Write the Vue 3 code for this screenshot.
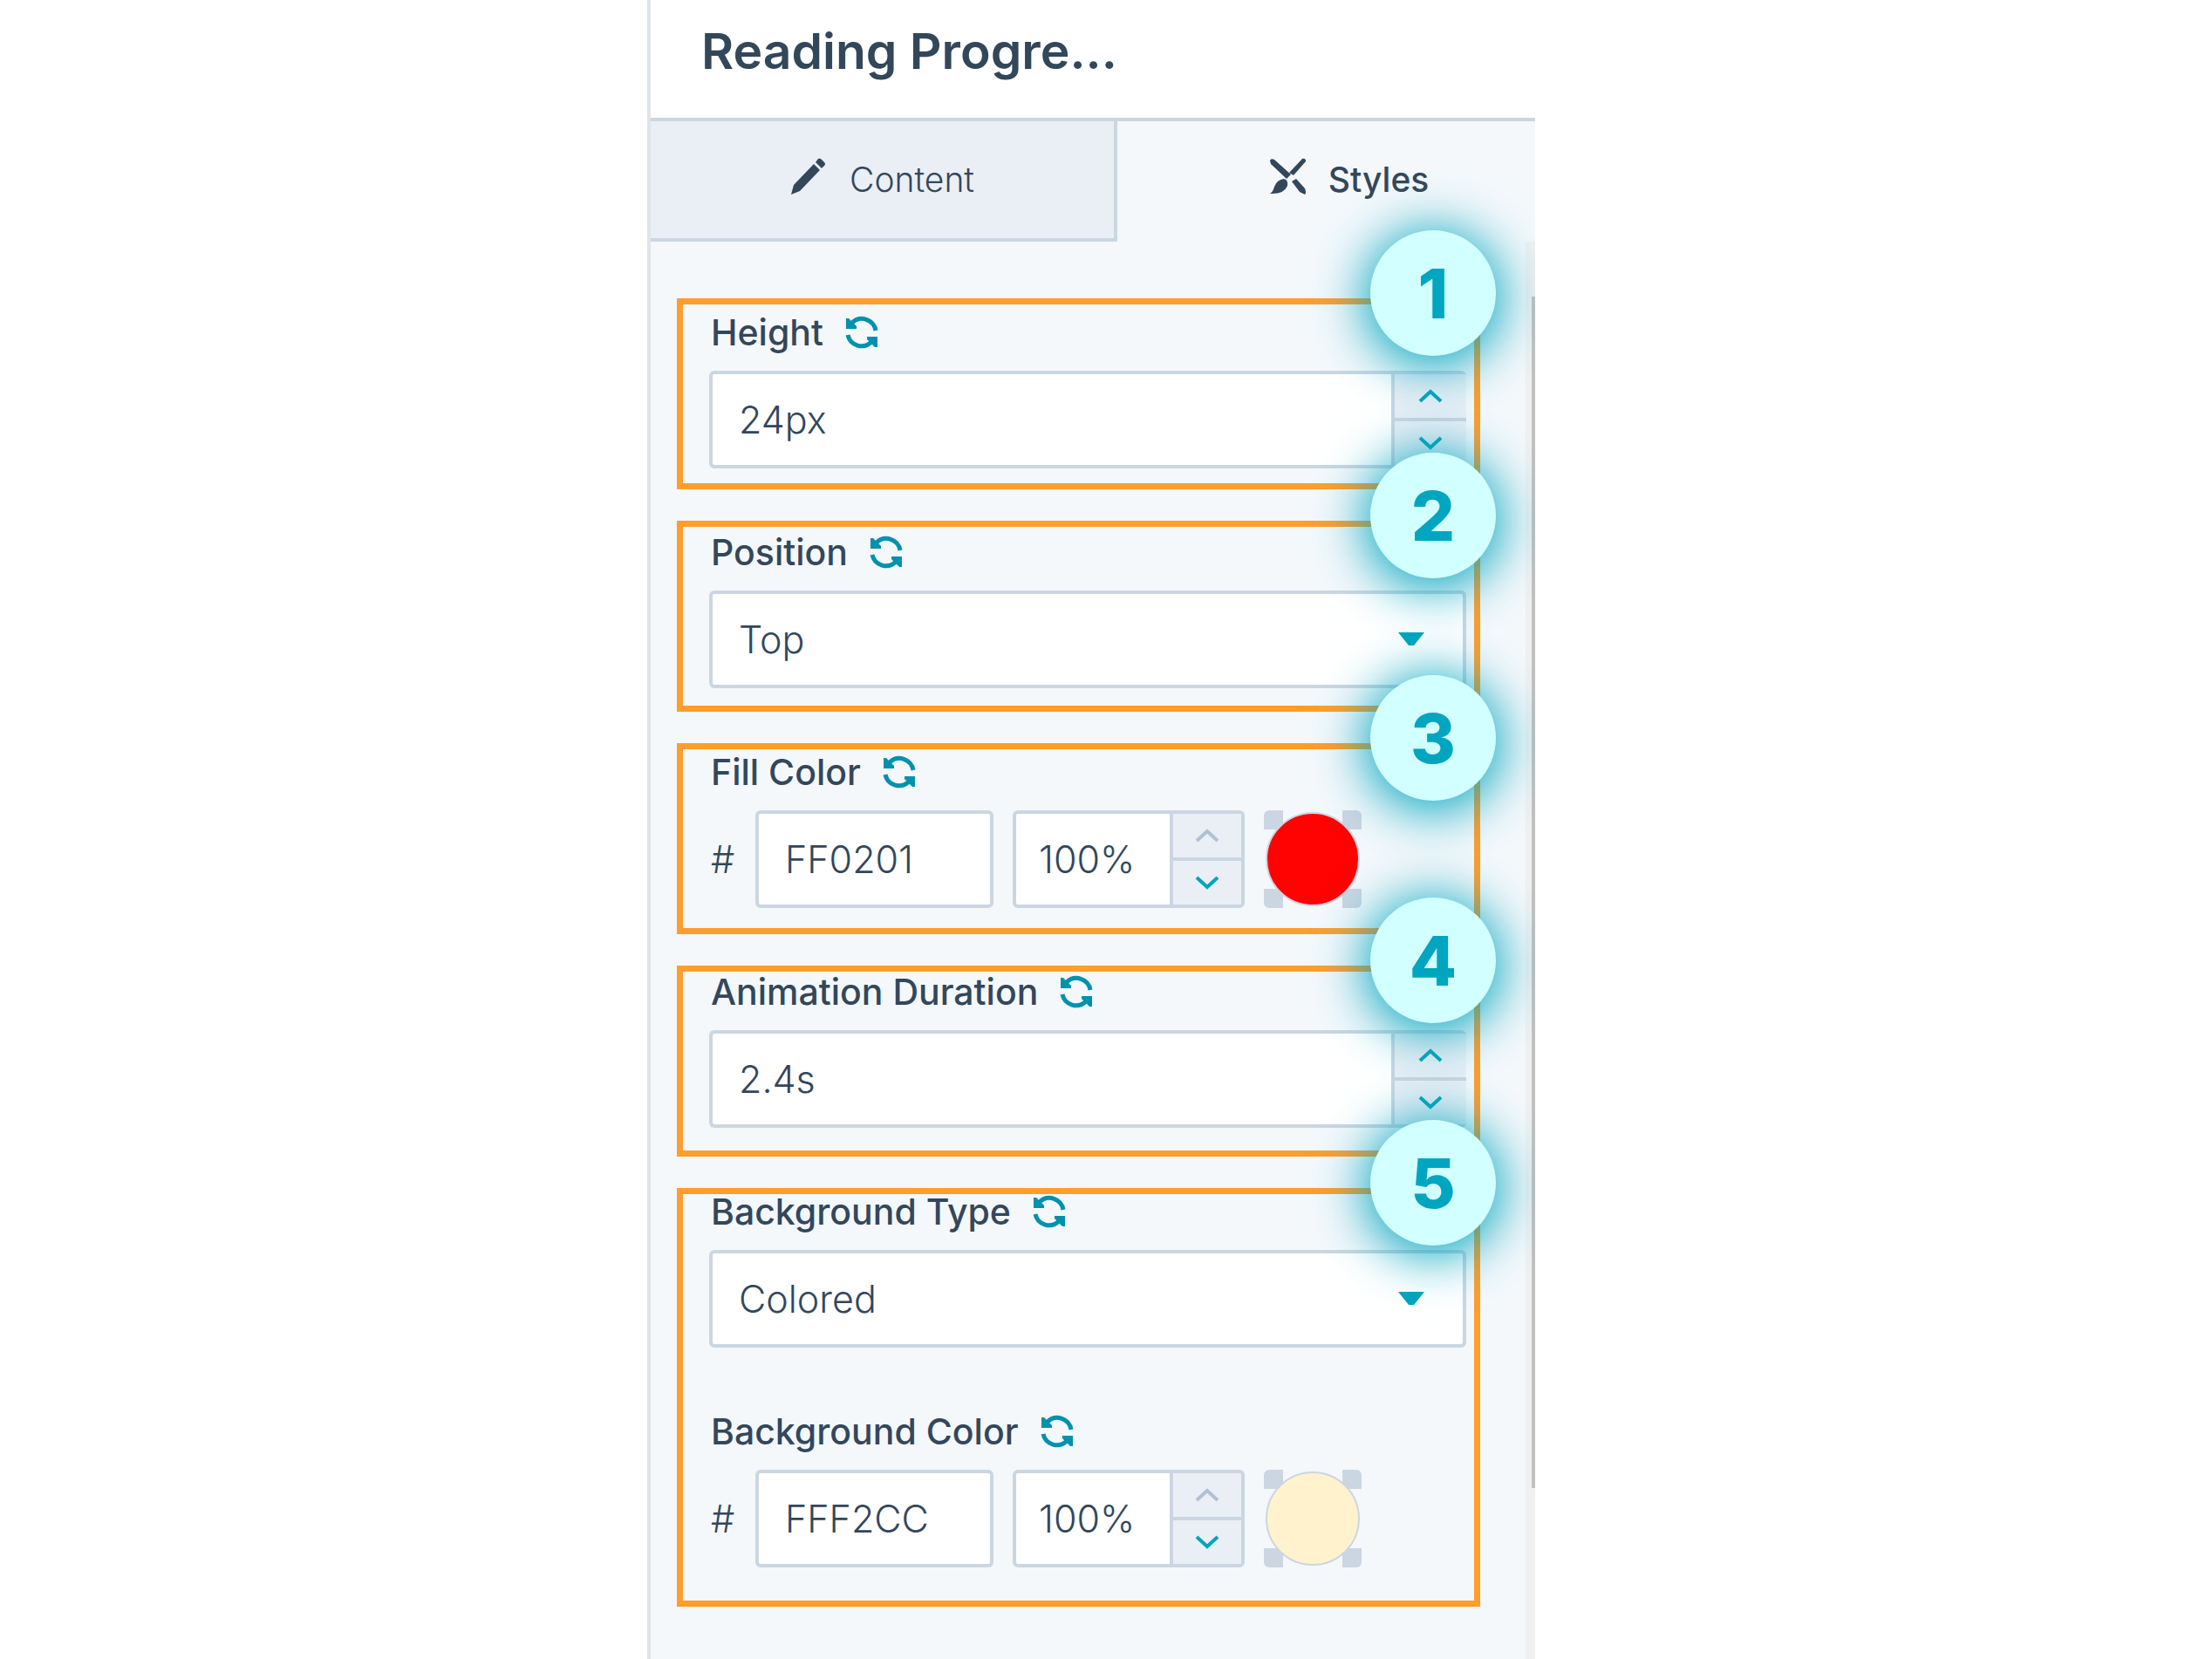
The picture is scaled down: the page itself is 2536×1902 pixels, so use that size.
<template>
  <div class="page">
    <main class="panel">
      <header class="panel-header">
        <h1>Reading Progre...</h1>
      </header>

      <nav class="tabs">
        <button type="button" class="tab">
          <svg class="tab-icon" viewBox="0 0 42 42" aria-hidden="true">
            <path d="M1 42 L4 31 L27 7 L34 14 L11 38 Z" />
            <path d="M29 5 L32 1 Q34 0 36 2 L39 5 Q41 7 39 9 L36 12 Z" />
          </svg>
          Content
        </button>
        <button type="button" class="tab active">
          <svg class="tab-icon" viewBox="0 0 42 42" aria-hidden="true">
            <path d="M1 3 Q2 0 6 2 L25 19 L20 24 L2 7 Z" />
            <path d="M38 1 Q42 0 42 4 L28 20 L23 17 Z" />
            <path d="M17 24 Q22 25 21 32 Q17 42 1 41 Q5 38 6 33 Q9 25 17 24 Z" />
            <path d="M26 27 L31 24 L41 35 Q43 40 41 42 L35 39 Z" />
          </svg>
          Styles
        </button>
      </nav>

      <div class="body">
        <form class="form" @submit.prevent>
          <div v-for="field in fields" :key="field.id" class="field">
            <div class="field-head">
              <label :for="field.id">{{ field.label }}</label>
              <button type="button" class="reset" :aria-label="'Reset ' + field.label" @click="field.value = field.initial">
                <svg viewBox="0 0 40 40" aria-hidden="true">
                  <path class="arc" d="M9 9 A16 16 0 0 1 36 18" />
                  <path class="arc" d="M4 23 A16 16 0 0 0 31 31" />
                  <path d="M2 4 L5 4 L14 13 L14 16 L2 16 Z" />
                  <path d="M38 37 L35 37 L26 28 L26 25 L38 25 Z" />
                </svg>
              </button>
            </div>

            <div v-if="field.type === 'number'" class="stepper">
              <input :id="field.id" v-model="field.value" type="text" />
              <div class="steps">
                <button type="button" aria-label="Increase">
                  <svg viewBox="0 0 30 18" aria-hidden="true"><path d="M3 15 L15 4 L27 15" /></svg>
                </button>
                <button type="button" aria-label="Decrease">
                  <svg viewBox="0 0 30 18" aria-hidden="true"><path d="M3 3 L15 14 L27 3" /></svg>
                </button>
              </div>
            </div>

            <div v-else-if="field.type === 'select'" class="dropdown">
              <select :id="field.id" v-model="field.value">
                <option v-for="option in field.options" :key="option">{{ option }}</option>
              </select>
              <svg viewBox="0 0 30 16" aria-hidden="true"><path d="M0 0 H30 L18 15 H12 Z" /></svg>
            </div>

            <div v-else class="color-row">
              <span class="hash">#</span>
              <input :id="field.id" v-model="field.value" class="hex" type="text" />
              <div class="stepper small">
                <input v-model="field.opacity" type="text" :aria-label="field.label + ' opacity'" />
                <div class="steps">
                  <button type="button" aria-label="Increase opacity" disabled>
                    <svg viewBox="0 0 30 18" aria-hidden="true"><path d="M3 15 L15 4 L27 15" /></svg>
                  </button>
                  <button type="button" aria-label="Decrease opacity">
                    <svg viewBox="0 0 30 18" aria-hidden="true"><path d="M3 3 L15 14 L27 3" /></svg>
                  </button>
                </div>
              </div>
              <button type="button" class="swatch" :aria-label="'Pick ' + field.label">
                <span class="dot" :style="{ backgroundColor: '#' + field.value }"></span>
              </button>
            </div>
          </div>
        </form>

        <div class="scrollbar"><div class="thumb"></div></div>

        <div class="callouts">
          <div v-for="n in 5" :key="n" class="callout" :class="{ tall: n === 5 }">
            <span class="badge">{{ n }}</span>
          </div>
        </div>
      </div>
    </main>
  </div>
</template>

<script setup>
import { ref } from 'vue';

const fields = ref([
  { id: 'height', label: 'Height', type: 'number', value: '24px', initial: '24px' },
  { id: 'position', label: 'Position', type: 'select', value: 'Top', initial: 'Top', options: ['Top', 'Bottom'] },
  { id: 'fill-color', label: 'Fill Color', type: 'color', value: 'FF0201', initial: 'FF0201', opacity: '100%' },
  { id: 'duration', label: 'Animation Duration', type: 'number', value: '2.4s', initial: '2.4s' },
  { id: 'bg-type', label: 'Background Type', type: 'select', value: 'Colored', initial: 'Colored', options: ['Colored', 'Transparent'] },
  { id: 'bg-color', label: 'Background Color', type: 'color', value: 'FFF2CC', initial: 'FFF2CC', opacity: '100%' },
]);
</script>

<style>
body {
  margin: 0;
  background-color: #fff;
}
</style>

<style scoped>
* {
  box-sizing: border-box;
}

.page {
  display: grid;
  grid-template-columns: 742fr 1018fr 776fr;
  height: 100vh;
  overflow: hidden;
  font-family: Inter, "Liberation Sans", sans-serif;
  color: #33475b;
}

button,
input,
select {
  margin: 0;
  padding: 0;
  border: none;
  border-radius: 0;
  background: none;
  font: inherit;
  color: inherit;
}

button {
  cursor: pointer;
}

.panel {
  grid-column: 2;
  display: flex;
  flex-direction: column;
  min-width: 0;
  min-height: 0;
  overflow: hidden;
  border-left: 4px solid #dfe3eb;
  background-color: #f4f8fb;
}

.panel-header {
  flex: none;
  height: 139px;
  padding: 23px 58px 0;
  border-bottom: 4px solid #cbd6e2;
  background-color: #fff;
}

h1 {
  margin: 0;
  font-size: 57px;
  line-height: 72px;
  font-weight: 600;
}

/* the second tab runs past the right edge of the panel */
.tabs {
  display: grid;
  flex: none;
  grid-template-columns: 1fr 1fr;
  width: calc(100% + 56px);
  height: 138px;
}

.tab {
  display: flex;
  align-items: center;
  justify-content: center;
  gap: 26px;
  border-right: 4px solid #cbd6e2;
  border-bottom: 4px solid #cbd6e2;
  background-color: #eaeff6;
  font-size: 39px;
  line-height: 48px;
  font-weight: 300;
}

.tab.active {
  border-color: transparent;
  background: none;
  font-weight: 500;
}

.tab-icon {
  width: 42px;
  height: 42px;
  margin-bottom: 8px;
  fill: #33475b;
}

.body {
  position: relative;
  display: flex;
  flex: 1;
  min-height: 0;
}

.form {
  display: flex;
  flex: 1;
  flex-direction: column;
  gap: 72px;
  min-width: 0;
  padding: 80px 68px 0 67px;
}

.field-head {
  display: flex;
  align-items: center;
  gap: 24px;
  height: 48px;
  margin-bottom: 20px;
  padding-left: 2px;
}

label {
  font-size: 41px;
  line-height: 48px;
  font-weight: 500;
}

.reset {
  display: flex;
}

.reset svg {
  width: 40px;
  height: 40px;
  fill: #0091ae;
}

.reset .arc {
  fill: none;
  stroke: #0091ae;
  stroke-width: 5;
}

.stepper,
.hex,
select {
  height: 112px;
  border: 4px solid #cbd6e2;
  border-radius: 6px;
  background-color: #fff;
  font-size: 43px;
  font-weight: 300;
}

.stepper {
  display: flex;
  overflow: hidden;
  border-right: none;
}

.stepper input {
  flex: 1;
  min-width: 0;
  padding-left: 30px;
}

.steps {
  display: flex;
  flex: none;
  flex-direction: column;
  width: 86px;
  border-left: 4px solid #cbd6e2;
  background-color: #eaeff6;
}

.steps button {
  display: flex;
  flex: 1;
  align-items: center;
  justify-content: center;
}

.steps button + button {
  border-top: 4px solid #cbd6e2;
}

.steps svg {
  width: 30px;
  height: 18px;
  fill: none;
  stroke: #00a4bd;
  stroke-width: 4;
}

.steps button:disabled svg {
  stroke: #b0c1d4;
}

.dropdown {
  display: grid;
  align-items: center;
}

.dropdown select,
.dropdown svg {
  grid-area: 1 / 1;
}

.dropdown select {
  width: 100%;
  padding-left: 30px;
  appearance: none;
}

.dropdown svg {
  justify-self: end;
  width: 30px;
  height: 16px;
  margin-right: 48px;
  fill: #00a4bd;
  pointer-events: none;
}

.color-row {
  display: flex;
  align-items: center;
  gap: 22px;
}

.hash {
  width: 31px;
  padding-left: 2px;
  font-size: 43px;
  font-weight: 300;
}

.hex {
  width: 273px;
  padding-left: 30px;
}

.small {
  width: 266px;
  border-right: 4px solid #cbd6e2;
}

.small input {
  padding-left: 26px;
}

.small .steps {
  width: 82px;
}

.swatch {
  display: flex;
  width: 112px;
  height: 112px;
  padding: 2px;
  border-radius: 6px;
  background:
    linear-gradient(#cbd6e2, #cbd6e2) left top / 22px 22px no-repeat,
    linear-gradient(#cbd6e2, #cbd6e2) right top / 22px 22px no-repeat,
    linear-gradient(#cbd6e2, #cbd6e2) left bottom / 22px 22px no-repeat,
    linear-gradient(#cbd6e2, #cbd6e2) right bottom / 22px 22px no-repeat;
}

.dot {
  flex: 1;
  border: 2px solid #cbd6e2;
  border-radius: 50%;
}

.scrollbar {
  flex: none;
  width: 11px;
  padding: 63px 0 196px 7px;
  background-color: #f0f0f0;
}

.thumb {
  height: 100%;
  background-color: #c1c1c1;
}

/* numbered outlines laid over the form */
.callouts {
  position: absolute;
  inset: 65px 63px 0 30px;
  display: flex;
  flex-direction: column;
  gap: 36px;
  pointer-events: none;
}

.callout {
  position: relative;
  flex: none;
  height: 219px;
  border: 7px solid #ff9d2d;
}

.callout.tall {
  height: 480px;
}

.badge {
  position: absolute;
  top: -85px;
  right: -25px;
  width: 144px;
  height: 144px;
  border-radius: 50%;
  background-color: #d2ffff;
  box-shadow: 0 6px 60px 6px #00a5bf;
  color: #00a5bf;
  font-size: 79px;
  line-height: 144px;
  font-weight: 800;
  text-align: center;
}
</style>
